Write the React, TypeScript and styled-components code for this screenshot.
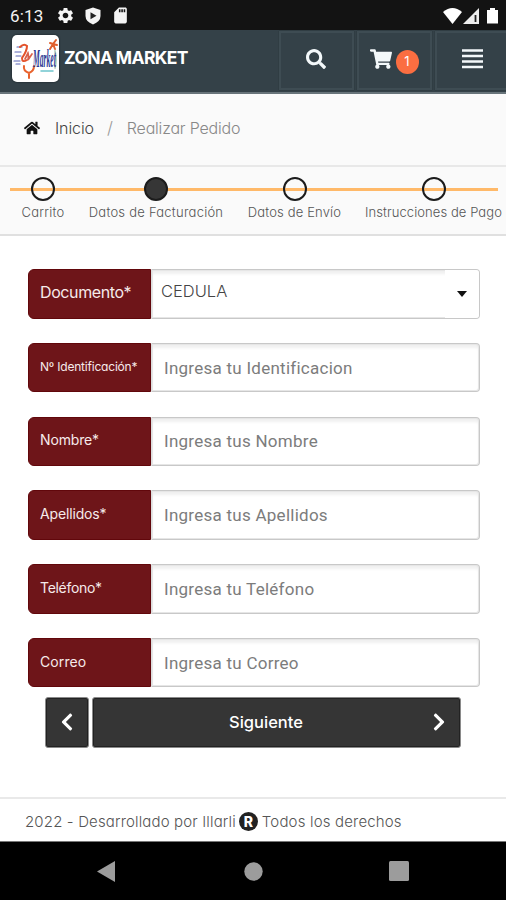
import React from "react";
import styled, { createGlobalStyle } from "styled-components";
import { FaSearch, FaShoppingCart, FaHome, FaChevronLeft, FaChevronRight } from "react-icons/fa";
import { MdSettings, MdSdCard } from "react-icons/md";

const GlobalStyle = createGlobalStyle`
  * { box-sizing: border-box; }
  body {
    margin: 0;
    background: #fff;
    font-family: Inter, "Open Sans", sans-serif;
    font-feature-settings: "cv11";
    overflow: hidden;
  }
  button { font-family: inherit; font-feature-settings: inherit; }
`;

const Screen = styled.div`
  width: 506px;
  height: 900px;
  display: flex;
  flex-direction: column;
  background: #fff;
  overflow: hidden;
`;

const Text = styled.span<{ $size: number; $track?: number; $weight?: number; $color?: string }>`
  font-size: ${(p) => p.$size}px;
  letter-spacing: ${(p) => p.$track ?? 0}px;
  font-weight: ${(p) => p.$weight ?? 300};
  color: ${(p) => p.$color ?? "#555"};
  white-space: nowrap;
`;

const StatusBar = styled.div`
  height: 30px;
  flex: none;
  background: #131313;
  color: #f4f4f4;
  display: flex;
  align-items: center;
  justify-content: space-between;
  padding: 1px 7px 0 10px;
`;

const StatusGroup = styled.div<{ $gap: number }>`
  display: flex;
  align-items: center;
  gap: ${(p) => p.$gap}px;
`;

const Clock = styled.span`
  font: 400 17px/20px Roboto, sans-serif;
  letter-spacing: 0.2px;
  width: 36px;
`;

const Header = styled.header`
  height: 64px;
  flex: none;
  background: #344148;
  border-bottom: 2px solid #68747a;
  display: flex;
  justify-content: space-between;
`;

const Brand = styled.div`
  display: flex;
  padding: 5px 0 0 12px;
  gap: 5px;
`;

const LogoTile = styled.div`
  width: 47px;
  height: 47px;
  border-radius: 5px;
  background: #fff;
  box-shadow: 0 0 2px #10191d;
  overflow: hidden;
`;

const BrandName = styled(Text)`
  line-height: 22px;
  padding-top: 12px;
`;

const HeaderActions = styled.div`
  display: grid;
  grid-template-columns: 75px 75px 75px;
  column-gap: 3px;
  margin-right: -4px;
  padding-top: 1px;
`;

const HeaderButton = styled.button`
  height: 59px;
  padding: 0 1px 3px 0;
  border: 2px solid #3e4c53;
  background: #344148;
  box-shadow: 0 0 1px #202a2f;
  color: #f3f8fa;
  display: flex;
  align-items: center;
  justify-content: center;
  gap: 4px;
`;

const CartCount = styled.span`
  width: 23px;
  height: 24px;
  border-radius: 50%;
  background: #fb6e41;
  color: #fff;
  font-size: 13px;
  line-height: 23px;
  text-align: center;
  margin-top: 6px;
`;

const Breadcrumb = styled.nav`
  height: 73px;
  flex: none;
  background: #fafafa;
  border-bottom: 2px solid #e8e8e8;
  display: flex;
  align-items: center;
  padding: 0 0 4px 24px;
  line-height: 20px;
`;

const Crumb = styled(Text)<{ $left: number }>`
  margin-left: ${(p) => p.$left}px;
`;

const Steps = styled.section`
  height: 69px;
  flex: none;
  background: #fafafa;
  border-bottom: 2px solid #e0e0e0;
  display: flex;
  position: relative;
`;

const StepTrack = styled.div`
  position: absolute;
  left: 10px;
  right: 8px;
  top: 21px;
  height: 3px;
  background: #ffb969;
`;

const Step = styled.div<{ $width: number }>`
  width: ${(p) => p.$width}px;
  flex: none;
  display: flex;
  flex-direction: column;
  align-items: center;
  padding-top: 10px;
  position: relative;
`;

const StepDot = styled.div<{ $active?: boolean }>`
  width: 24px;
  height: 24px;
  border-radius: 50%;
  border: 2px solid #1c1c1c;
  background: ${(p) =>
    p.$active ? "#363636" : "linear-gradient(#fafafa 9px, #ffb969 9px, #ffb969 12px, #fafafa 12px)"};
  margin-bottom: 2px;
`;

const StepLabel = styled(Text)`
  line-height: 18px;
`;

const Form = styled.form`
  flex: none;
  display: flex;
  flex-direction: column;
  gap: 24.3px;
  padding: 33px 26px 0 28px;
`;

const Field = styled.label`
  height: 49.5px;
  display: flex;
`;

const FieldLabel = styled.span`
  width: 123px;
  background: #6e1519;
  border: 1px solid #61070b;
  border-radius: 6px 0 0 6px;
  padding: 0 0 3px 11px;
  display: flex;
  align-items: center;
`;

const FieldBox = styled.span`
  flex: 1;
  border: 1px solid #c8c8c8;
  border-left-color: #ddd;
  border-radius: 0 4px 4px 0;
  box-shadow: inset 0 0 0 1px #e6e6e6, inset 0 4px 3px #f0f0f0;
  display: flex;
  align-items: center;
  justify-content: space-between;
`;

const Input = styled.input`
  width: 100%;
  border: 0;
  outline: 0;
  background: transparent;
  padding: 0 12px;
  font: 400 17px/22px Roboto, sans-serif;
  letter-spacing: 0.26px;
  &::placeholder { color: #7c7c7c; opacity: 1; }
`;

const SelectValue = styled(Text)`
  padding: 0 0 5px 9px;
`;

const SelectArrow = styled.span`
  align-self: stretch;
  width: 34px;
  background: #fff;
  border-radius: 0 3px 3px 0;
  display: flex;
  align-items: center;
  padding-left: 12px;
`;

const Actions = styled.div`
  flex: none;
  display: flex;
  gap: 3px;
  padding: 9.5px 45px 0;
`;

const ActionButton = styled.button<{ $wide?: boolean }>`
  ${(p) => (p.$wide ? "flex: 1;" : "width: 44px;")}
  height: 51px;
  border: 1px solid #8a8a8a;
  border-radius: 3px;
  background: #353535;
  box-shadow: inset 0 0 0 1px #222;
  color: #fff;
  display: grid;
  grid-template-columns: ${(p) => (p.$wide ? "20px 1fr 20px" : "1fr")};
  align-items: center;
  justify-items: center;
  padding: 0 ${(p) => (p.$wide ? 11 : 1)}px 0 0;
`;

const ButtonText = styled(Text)`
  grid-column: 2;
  padding: 0 10px 0 0;
`;

const Footer = styled.footer`
  margin-top: auto;
  flex: none;
  height: 45px;
  border-top: 2px solid #e9e9e9;
  border-bottom: 1px solid #777;
  padding: 3px 0 0 25px;
  display: flex;
  align-items: center;
`;

const Registered = styled.span`
  width: 19px;
  height: 19px;
  border-radius: 50%;
  background: #222;
  color: #fff;
  font-size: 14px;
  font-weight: 800;
  line-height: 19px;
  text-align: center;
  margin: 0 4px 0 3px;
`;

const SystemNav = styled.div`
  height: 58px;
  flex: none;
  background: #000;
  display: grid;
  grid-template-columns: repeat(3, 146px);
  justify-content: center;
  justify-items: center;
  align-items: center;
`;

const Logo = () => (
  <svg width="47" height="47" viewBox="0 0 47 47">
    <g fill="none" strokeLinecap="round">
      <path d="M5 12h5M3 17h6M4 21h5M2 26h6M4 29h4" stroke="#5a65b5" strokeWidth="1.2" />
      <path d="M8 12q4-4 7-1q0 5-5 12q0 5 5 2" stroke="#e4532c" strokeWidth="2" />
      <path d="M13 24l3-6q1 3 0 7l4-6" stroke="#d9604b" strokeWidth="1.700" />
      <path d="M12 31q-1 5 5 7q5-2 5-7M17 38v5" stroke="#e8622d" strokeWidth="2" />
      <path d="M38 8l3 1l3-4M41 9l4 1M41 9l2 5M41 9l-3 5" stroke="#e0602d" strokeWidth="2" />
      <path d="M43 16q2 9 0 17" stroke="#b5d0bf" strokeWidth="1.800" />
      <path d="M29 36h12" stroke="#6dc5cd" strokeWidth="1.500" />
    </g>
    <g transform="translate(21 32) scale(.4 1.300)">
      <text fontFamily="Liberation Serif" fontStyle="italic" fontWeight="700" fontSize="19" fill="#2d3993">Market</text>
    </g>
  </svg>
);

const ShieldIcon = () => (
  <svg width="16" height="18" viewBox="0 0 16 18">
    <path d="M8 .5 15.500 3v6q0 5.500-7.500 8.500Q.5 14.500.5 9V3Z" fill="#f4f4f4" />
    <path d="M5.500 5.200v7l6-3.500Z" fill="#222" />
  </svg>
);

const SignalIcons = () => (
  <svg width="56" height="18" viewBox="0 0 56 18">
    <path d="M0 5q9.500-8 19 0L9.500 17Z" fill="#fff" />
    <path d="M20 17 36 1v16Z" fill="#eee" />
    <path d="M32.500 8v7" stroke="#222" strokeWidth="1.800" />
    <path d="M44 3h3V1h5v2h3v13.500H44Z" fill="#fff" />
  </svg>
);

const MenuIcon = () => (
  <svg width="21" height="20" viewBox="0 0 21 20">
    <path d="M0 1.500h21M0 7h21M0 12.500h21M0 18h21" stroke="#f3f8fa" strokeWidth="2.600" />
  </svg>
);

const steps = [
  { label: "Carrito", width: 86, track: 0.22 },
  { label: "Datos de Facturación", width: 140, track: 0.24, active: true },
  { label: "Datos de Envío", width: 137, track: 0.15 },
  { label: "Instrucciones de Pago", width: 141, track: 0.08 },
];

const fields = [
  { label: "Nº Identificación*", hint: "Ingresa tu Identificacion", size: 12, track: -0.2 },
  { label: "Nombre*", hint: "Ingresa tus Nombre", size: 14, track: -0.15 },
  { label: "Apellidos*", hint: "Ingresa tus Apellidos", size: 14, track: -0.15 },
  { label: "Teléfono*", hint: "Ingresa tu Teléfono", size: 14, track: -0.3 },
  { label: "Correo", hint: "Ingresa tu Correo", size: 14, track: 0.1 },
];

export default function App() {
  return (
    <Screen>
      <GlobalStyle />
      <StatusBar>
        <StatusGroup $gap={10}>
          <Clock>6:13</Clock>
          <MdSettings size={19} />
          <ShieldIcon />
          <MdSdCard size={19} />
        </StatusGroup>
        <SignalIcons />
      </StatusBar>
      <Header>
        <Brand>
          <LogoTile><Logo /></LogoTile>
          <BrandName $size={17.5} $weight={700} $color="#fff" $track={-0.65}>ZONA MARKET</BrandName>
        </Brand>
        <HeaderActions>
          <HeaderButton type="button" aria-label="Buscar"><FaSearch size={20} /></HeaderButton>
          <HeaderButton type="button" aria-label="Carrito">
            <FaShoppingCart size={22} />
            <CartCount>1</CartCount>
          </HeaderButton>
          <HeaderButton type="button" aria-label="Menú"><MenuIcon /></HeaderButton>
        </HeaderActions>
      </Header>
      <Breadcrumb>
        <FaHome size={16} color="#111" />
        <Crumb $left={15} $size={16} $color="#444" $track={-0.1}>Inicio</Crumb>
        <Crumb $left={13} $size={17} $color="#999">/</Crumb>
        <Crumb $left={14} $size={16} $color="#888" $track={-0.2}>Realizar Pedido</Crumb>
      </Breadcrumb>
      <Steps>
        <StepTrack />
        {steps.map((s) => (
          <Step key={s.label} $width={s.width}>
            <StepDot $active={s.active} />
            <StepLabel $size={13} $track={s.track}>{s.label}</StepLabel>
          </Step>
        ))}
      </Steps>
      <Form>
        <Field>
          <FieldLabel><Text $size={16} $color="#f6eaea" $weight={400} $track={-0.4}>Documento*</Text></FieldLabel>
          <FieldBox>
            <SelectValue $size={16.5} $color="#444">CEDULA</SelectValue>
            <SelectArrow>
              <svg width="10" height="6" viewBox="0 0 10 6"><path d="M0 0h10L5 6Z" fill="#111" /></svg>
            </SelectArrow>
          </FieldBox>
        </Field>
        {fields.map((f) => (
          <Field key={f.label}>
            <FieldLabel><Text $size={f.size} $track={f.track} $color="#f6eaea" $weight={400}>{f.label}</Text></FieldLabel>
            <FieldBox><Input placeholder={f.hint} /></FieldBox>
          </Field>
        ))}
      </Form>
      <Actions>
        <ActionButton type="button" aria-label="Anterior"><FaChevronLeft size={20} /></ActionButton>
        <ActionButton type="button" $wide>
          <ButtonText $size={16.5} $weight={500} $color="#fff">Siguiente</ButtonText>
          <FaChevronRight size={20} />
        </ActionButton>
      </Actions>
      <Footer>
        <Text $size={15} $track={0.15}>2022 - Desarrollado por Illarli</Text>
        <Registered>R</Registered>
        <Text $size={15} $track={0.17}>Todos los derechos</Text>
      </Footer>
      <SystemNav>
        <svg width="20" height="21" viewBox="0 0 20 21"><path d="M18 0v21L0 10.500Z" fill="#9c9c9c" /></svg>
        <svg width="19" height="19" viewBox="0 0 19 19"><circle cx="9.500" cy="9.500" r="9.200" fill="#9c9c9c" /></svg>
        <svg width="20" height="20" viewBox="0 0 20 20"><rect width="20" height="20" rx="1.500" fill="#9c9c9c" /></svg>
      </SystemNav>
    </Screen>
  );
}
